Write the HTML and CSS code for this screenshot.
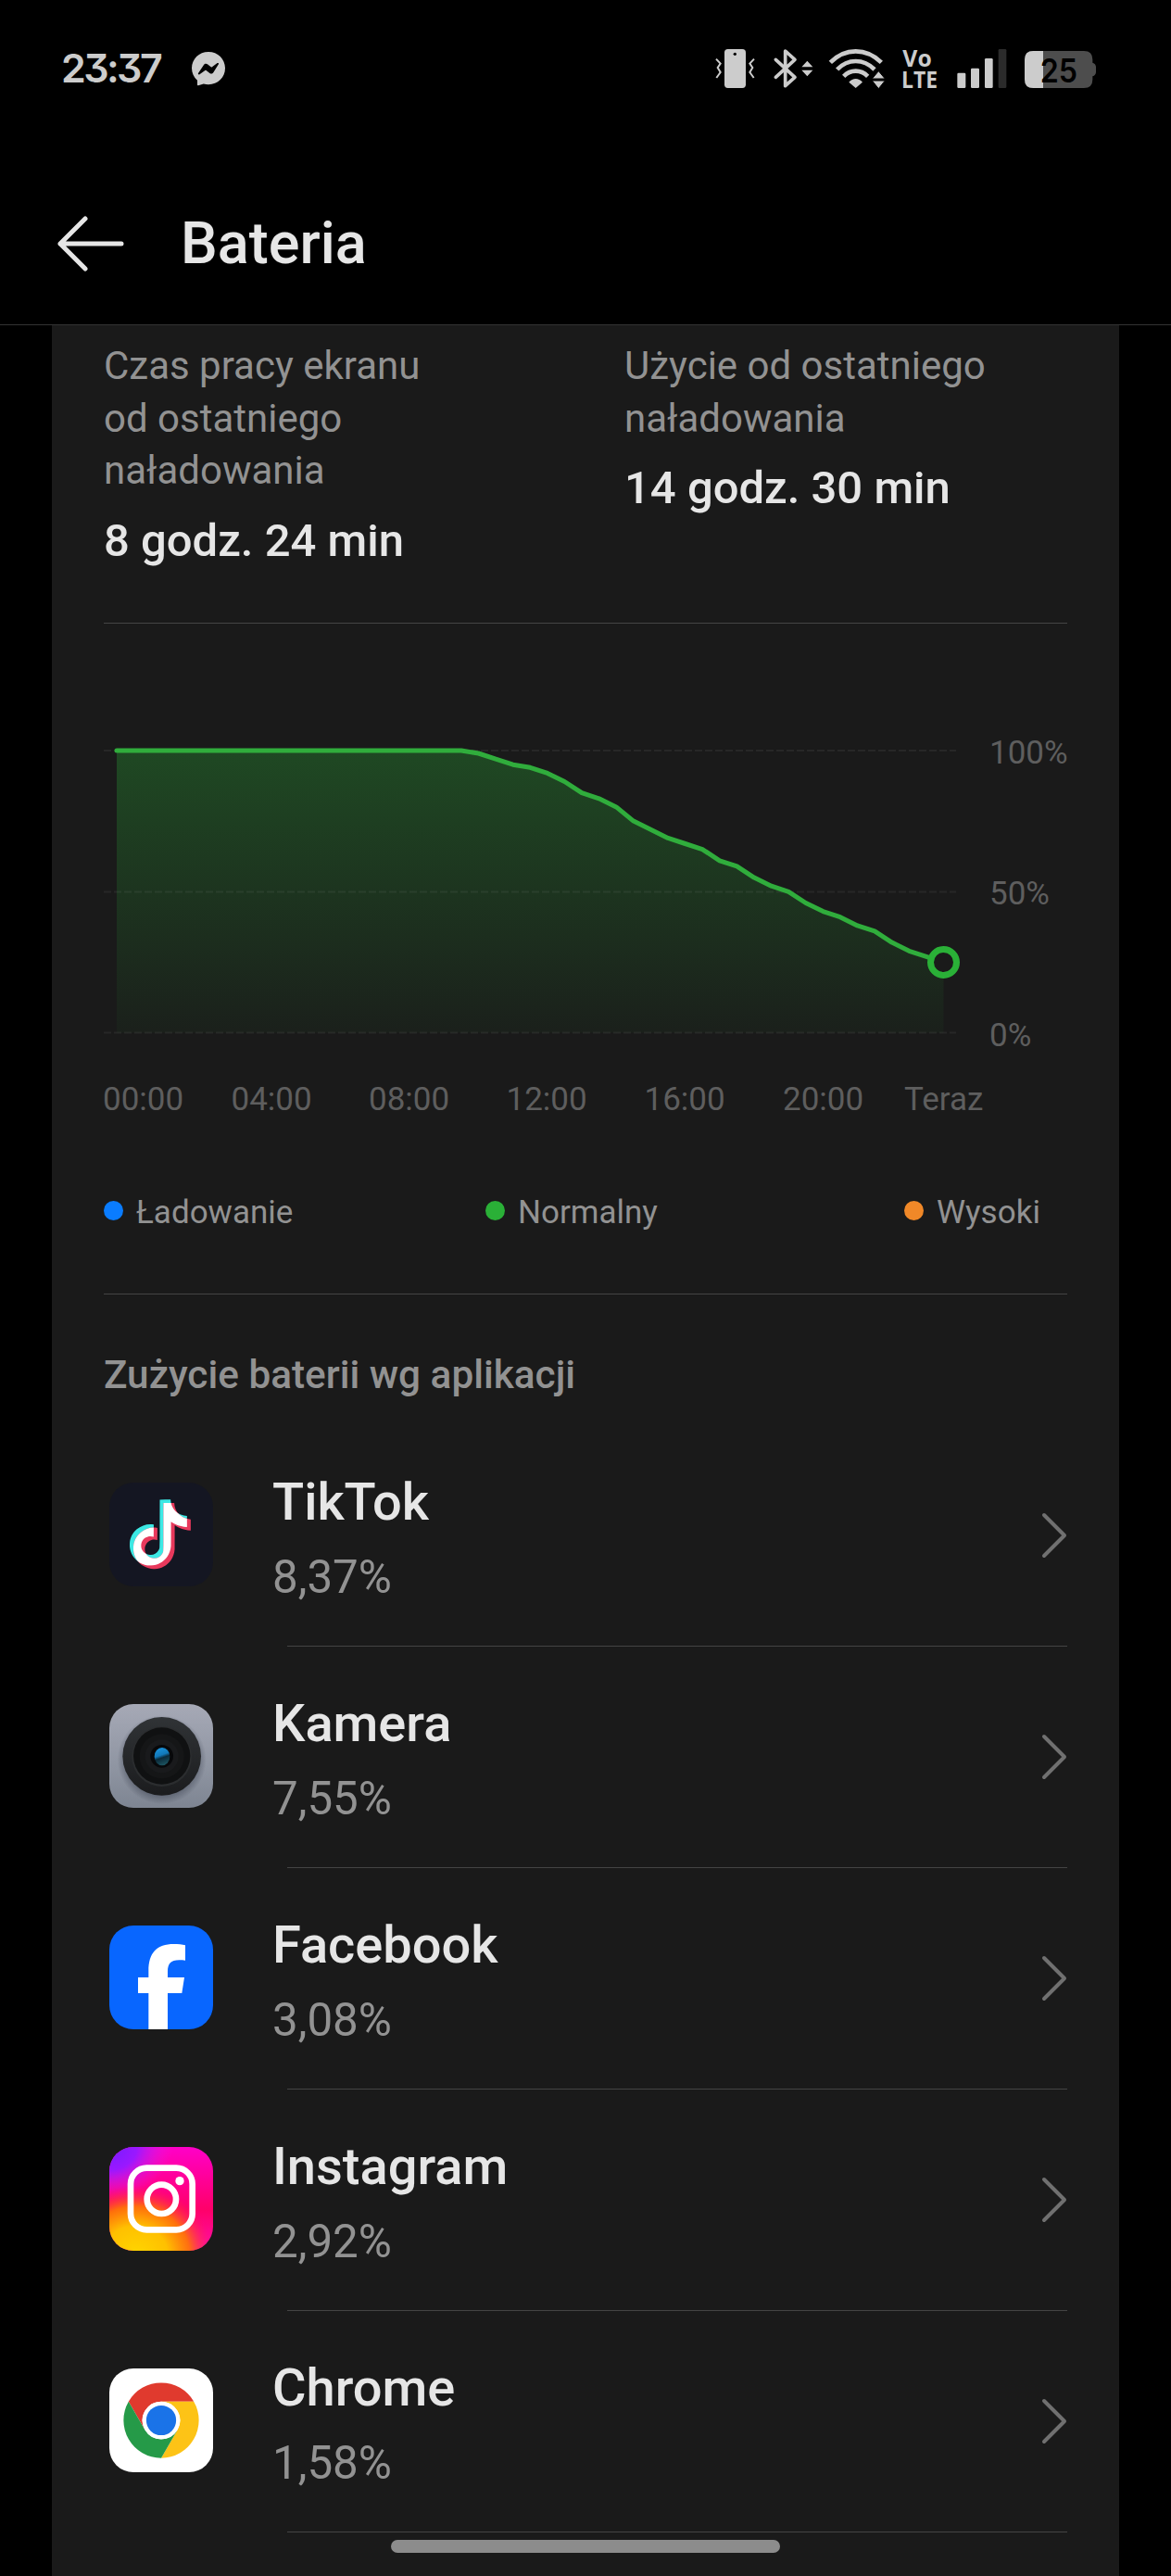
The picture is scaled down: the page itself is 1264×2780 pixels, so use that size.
FILE: index.html
```html
<!DOCTYPE html>
<html lang="pl">
<head>
  <meta charset="UTF-8">
  <title>Bateria</title>
  <link rel="stylesheet" href="styles.css">
</head>
<body>
  <div class="statusbar">
    <span class="clock">23:37</span>
    <svg class="messenger" viewBox="0 0 36 36" width="36" height="36">
      <path fill="#ccc" d="M18 0C28.200 0 36 7.600 36 17.600S28.200 35.200 18 35.200c-1.900 0-3.600-.2-5.200-.7L7 36.200c-.6.200-1-.1-1-.7v-4.700C2.200 27.500 0 22.900 0 17.600 0 7.600 7.800 0 18 0z"/>
      <path fill="#000" d="M7 23l6-9c.9-1.400 2.600-1.700 3.900-.7l3.800 2.900c.4.300.8.300 1.200 0l5.700-4.100c.9-.6 1.900.3 1.300 1.200l-5.600 8.900c-.9 1.400-2.600 1.700-3.900.7l-3.800-2.900c-.4-.3-.8-.3-1.200 0l-6 4.200c-.9.600-2-.3-1.400-1.200z"/>
    </svg>
    <div class="status-icons">
      <!-- wibracje -->
      <svg viewBox="66 69 137 126" width="45.670" height="42">
        <rect x="96" y="69" width="69" height="126" rx="11" fill="#ccc"/>
        <circle cx="130" cy="85" r="5" fill="#000"/>
        <path d="M69 101l14 15-9 13 9 15-13 18M192 101l-14 15 9 13-9 15 13 18" fill="none" stroke="#ccc" stroke-width="6"/>
      </svg>
      <!-- bluetooth -->
      <svg viewBox="257 69 123 126" width="41" height="42">
        <path d="M261 103l62 57-31 28V75l31 28-62 57" fill="none" stroke="#ccc" stroke-width="11" stroke-linejoin="round" stroke-linecap="round"/>
        <path d="M345 127l18-20 18 20zM345 137l18 20 18-20z" fill="#ccc"/>
      </svg>
      <!-- wifi -->
      <svg viewBox="434 69 183 126" width="61" height="42">
        <g fill="none" stroke="#ccc" stroke-width="14">
          <path d="M438 112Q474 76 520 76T603 112"/>
          <path d="M460 135Q486 108 520 108T581 135"/>
          <path d="M481 157Q498 140 520 140T559 157"/>
        </g>
        <path d="M498 176Q508 165 520 165T542 176L520 195z" fill="#ccc"/>
        <path d="M573 165l21-25 21 25zM573 171l21 26 21-26z" fill="#ccc" stroke="#000" stroke-width="3"/>
      </svg>
      <svg class="volte" viewBox="671 69 123 126" width="41" height="42">
        <text x="672" y="125" font-size="74" textLength="94" lengthAdjust="spacingAndGlyphs">Vo</text>
        <text x="668" y="194" font-size="74" textLength="117" lengthAdjust="spacingAndGlyphs">LTE</text>
      </svg>
      <!-- zasięg -->
      <svg viewBox="848 69 166 126" width="55.330" height="42">
        <rect x="849" y="146" width="27" height="49" rx="4" fill="#ccc"/>
        <rect x="893" y="131" width="27" height="64" rx="4" fill="#ccc"/>
        <rect x="938" y="99" width="26" height="96" rx="4" fill="#ccc"/>
        <rect x="982" y="69" width="26" height="126" rx="4" fill="#2b2b2b"/>
      </svg>
      <svg class="battery" viewBox="1068 69 234 126" width="78" height="42">
        <path d="M1096 75h164q28 0 28 28v10q11 4 11 14v16q0 10-11 14v10q0 28-28 28h-164q-28 0-28-28v-64q0-28 28-28z" fill="#4d4d4d"/>
        <path d="M1128 75h-32q-28 0-28 28v64q0 28 28 28h32z" fill="#ccc"/>
        <text x="1118" y="177" font-size="107" textLength="121" lengthAdjust="spacingAndGlyphs">25</text>
      </svg>
    </div>
  </div>

  <header class="header">
    <svg class="back" viewBox="0 0 72 60" width="72" height="60">
      <path d="M30 3L3 30l27 27M3 30h66" fill="none" stroke="#e6e6e6" stroke-width="5" stroke-linecap="round" stroke-linejoin="round"/>
    </svg>
    <h1>Bateria</h1>
  </header>

  <main class="card">
    <section class="stats">
      <div class="stat">
        <p class="label">Czas pracy ekranu<br>od ostatniego<br>naładowania</p>
        <p class="value">8 godz. 24 min</p>
      </div>
      <div class="stat">
        <p class="label">Użycie od ostatniego<br>naładowania</p>
        <p class="value">14 godz. 30 min</p>
      </div>
    </section>

    <svg class="chart" viewBox="112 673 1048 567" width="1048" height="567">
      <defs>
        <linearGradient id="fill" gradientUnits="userSpaceOnUse" x1="0" y1="810" x2="0" y2="1115">
          <stop offset="0" stop-color="#2ab037" stop-opacity=".31"/>
          <stop offset="1" stop-color="#2ab037" stop-opacity=".04"/>
        </linearGradient>
      </defs>
      <path id="area" fill="url(#fill)"/>
      <g class="grid">
        <path d="M112 810H1032"/>
        <path d="M112 962.500H1032"/>
        <path d="M112 1114.500H1032"/>
      </g>
      <path id="line" class="line"/>
      <circle cx="1018.500" cy="1038.500" r="14" class="now"/>
      <g class="axis">
        <text x="1068" y="824">100%</text>
        <text x="1068" y="976">50%</text>
        <text x="1068" y="1129">0%</text>
        <text x="111" y="1197.500">00:00</text>
        <text x="249.500" y="1197.500">04:00</text>
        <text x="398" y="1197.500">08:00</text>
        <text x="546.500" y="1197.500">12:00</text>
        <text x="695.500" y="1197.500">16:00</text>
        <text x="845" y="1197.500">20:00</text>
        <text x="976" y="1197.500">Teraz</text>
      </g>
    </svg>

    <div class="legend">
      <span class="blue">Ładowanie</span>
      <span class="green">Normalny</span>
      <span class="orange">Wysoki</span>
    </div>

    <h2>Zużycie baterii wg aplikacji</h2>

    <ul class="apps">
      <li>
        <svg class="icon" viewBox="0 0 336 336">
          <defs>
            <path id="note" d="M12.525.02c1.310-.02 2.610-.01 3.910-.02.08 1.530.63 3.090 1.750 4.170 1.120 1.110 2.700 1.620 4.240 1.790v4.030c-1.440-.05-2.890-.35-4.200-.97-.57-.26-1.100-.59-1.620-.93-.01 2.920.01 5.840-.02 8.750-.08 1.400-.54 2.790-1.350 3.940-1.310 1.920-3.580 3.170-5.910 3.210-1.430.08-2.860-.31-4.080-1.030-2.020-1.190-3.440-3.370-3.650-5.710-.02-.5-.03-1-.01-1.490.18-1.900 1.120-3.720 2.580-4.960 1.660-1.440 3.980-2.130 6.150-1.720.02 1.480-.04 2.960-.04 4.440-.99-.32-2.150-.23-3.020.37-.63.41-1.110 1.040-1.360 1.750-.21.51-.15 1.070-.14 1.610.24 1.640 1.820 3.020 3.500 2.870 1.120-.01 2.190-.66 2.770-1.610.19-.33.4-.67.41-1.060.1-1.790.06-3.570.07-5.360.01-4.030-.01-8.050.02-12.070z"/>
            <clipPath id="noteClip"><use href="#note" transform="translate(52 55) scale(8.900)"/></clipPath>
          </defs>
          <rect width="336" height="336" rx="78" fill="#141622"/>
          <use href="#note" transform="translate(52 55) scale(8.900)" fill="#3ce8e4"/>
          <use href="#note" transform="translate(64 66) scale(8.900)" fill="#e8395c"/>
          <g clip-path="url(#noteClip)"><use href="#note" transform="translate(64 66) scale(8.900)" fill="#fff"/></g>
        </svg>
        <div class="info"><p class="name">TikTok</p><p class="percent">8,37%</p></div>
        <svg class="chevron" viewBox="0 0 28 50"><path d="M3 3l22 22L3 47"/></svg>
      </li>
      <li>
        <svg class="icon" viewBox="0 0 336 336">
          <defs>
            <linearGradient id="metal" x1="0" y1="0" x2="0" y2="1">
              <stop offset="0" stop-color="#a6a9b6"/><stop offset=".6" stop-color="#8f95a2"/><stop offset="1" stop-color="#7e8592"/>
            </linearGradient>
            <linearGradient id="ring" x1="0" y1="0" x2="0" y2="1">
              <stop offset="0" stop-color="#303336"/><stop offset="1" stop-color="#1b1c1e"/>
            </linearGradient>
            <linearGradient id="glass" x1=".3" y1="0" x2=".6" y2="1">
              <stop offset="0" stop-color="#1a93dc"/><stop offset=".42" stop-color="#1278b8"/><stop offset=".58" stop-color="#0a2a3a"/><stop offset="1" stop-color="#1d5662"/>
            </linearGradient>
            <radialGradient id="shade"><stop offset=".8" stop-color="#3c4250" stop-opacity=".5"/><stop offset="1" stop-color="#3c4250" stop-opacity="0"/></radialGradient>
          </defs>
          <rect width="336" height="336" rx="78" fill="url(#metal)"/>
          <circle cx="170" cy="180" r="144" fill="url(#shade)"/>
          <circle cx="170" cy="169" r="127" fill="url(#ring)"/>
          <circle cx="170" cy="170" r="97" fill="#2b2d2f"/>
          <circle cx="170" cy="168" r="92" fill="#101112"/>
          <circle cx="170" cy="169" r="72" fill="#151617"/>
          <circle cx="170" cy="169" r="54" fill="#191a1c"/>
          <circle cx="170" cy="169" r="37" fill="#07080a"/>
          <ellipse cx="171" cy="170" rx="25" ry="29" fill="url(#glass)"/>
        </svg>
        <div class="info"><p class="name">Kamera</p><p class="percent">7,55%</p></div>
        <svg class="chevron" viewBox="0 0 28 50"><path d="M3 3l22 22L3 47"/></svg>
      </li>
      <li>
        <svg class="icon" viewBox="0 0 336 336">
          <rect width="336" height="336" rx="78" fill="#0866ff"/>
          <path d="M127 336V219H93v-51h34v-21c0-58 26-87 82-87 13 0 28 1 37 4v49c-6-1-12-1-20-1-27 0-37 11-37 38v18h54l-8 51h-46v117z" fill="#fff"/>
        </svg>
        <div class="info"><p class="name">Facebook</p><p class="percent">3,08%</p></div>
        <svg class="chevron" viewBox="0 0 28 50"><path d="M3 3l22 22L3 47"/></svg>
      </li>
      <li>
        <svg class="icon" viewBox="0 0 336 336">
          <defs>
            <linearGradient id="pink" x1=".5" y1="0" x2=".5" y2="1">
              <stop offset="0" stop-color="#ff00c8"/><stop offset=".6" stop-color="#ff0069"/><stop offset="1" stop-color="#ff10a8"/>
            </linearGradient>
            <radialGradient id="purple" gradientUnits="userSpaceOnUse" cx="0" cy="0" r="200" gradientTransform="translate(10 10) rotate(-15) scale(1 .8)">
              <stop offset="0" stop-color="#7a1cff"/><stop offset=".4" stop-color="#9a18ff"/><stop offset="1" stop-color="#f01ce0" stop-opacity="0"/>
            </radialGradient>
            <radialGradient id="yellow" gradientUnits="userSpaceOnUse" cx="0" cy="0" r="250" gradientTransform="translate(85 350) scale(1 .9)">
              <stop offset="0" stop-color="#ffd600"/><stop offset=".42" stop-color="#ffc000"/><stop offset=".7" stop-color="#ff7a00" stop-opacity=".9"/><stop offset="1" stop-color="#ff1a50" stop-opacity="0"/>
            </radialGradient>
          </defs>
          <rect width="336" height="336" rx="78" fill="url(#pink)"/>
          <rect width="336" height="336" rx="78" fill="url(#purple)"/>
          <rect width="336" height="336" rx="78" fill="url(#yellow)"/>
          <g fill="none" stroke="#fff" stroke-width="20">
            <rect x="69" y="68" width="200" height="200" rx="52"/>
            <circle cx="169" cy="169" r="47"/>
          </g>
          <circle cx="228" cy="110" r="14" fill="#fff"/>
        </svg>
        <div class="info"><p class="name">Instagram</p><p class="percent">2,92%</p></div>
        <svg class="chevron" viewBox="0 0 28 50"><path d="M3 3l22 22L3 47"/></svg>
      </li>
      <li>
        <svg class="icon" viewBox="-56 -56 112 112">
          <rect x="-56" y="-56" width="112" height="112" rx="26" fill="#fff"/>
          <path fill="#e03a2e" d="M-35.200-20.300A40.700 40.700 0 0 1 35.200-20.300H0A20.300 20.300 0 0 0-17.600 10.200z"/>
          <path fill="#fdc316" d="M35.200-20.300A40.700 40.700 0 0 1 0 40.700L17.600 10.200A20.300 20.300 0 0 0 0-20.300z"/>
          <path fill="#259a48" d="M0 40.700A40.700 40.700 0 0 1-35.200-20.300L-17.600 10.200A20.300 20.300 0 0 0 17.600 10.200z"/>
          <circle r="20.300" fill="#fff"/>
          <circle r="16.100" fill="#1a73e8"/>
        </svg>
        <div class="info"><p class="name">Chrome</p><p class="percent">1,58%</p></div>
        <svg class="chevron" viewBox="0 0 28 50"><path d="M3 3l22 22L3 47"/></svg>
      </li>
    </ul>
  </main>
  <div class="home-bar"></div>

  <script>
    // poziom baterii co pół godziny, po 10:00 zaczyna spadać
    const levels = Array(21).fill(100).concat([
      99, 97, 95, 94, 92, 89, 85, 83, 80, 75, 72, 69, 67, 65,
      61, 59, 55, 52, 50, 46, 43, 41, 38, 36, 32, 29, 27, 25
    ]);
    const points = levels.map((level, i) =>
      (126 + i * 18.594).toFixed(1) + " " + (810 + (100 - level) * 3.046).toFixed(1));
    const line = "M" + points.join("L");
    document.getElementById("line").setAttribute("d", line);
    document.getElementById("area").setAttribute("d", line + "V1114.500H126Z");
  </script>
</body>
</html>
```
FILE: styles.css
```css
* {
  box-sizing: border-box;
}
body {
  margin: 0;
  height: 2780px;
  overflow: hidden;
  background: #000;
  color: #e6e6e6;
  font-family: Roboto, sans-serif;
}
svg {
  display: block;
  flex: none;
  overflow: visible;
}
p, h1, h2, ul {
  margin: 0;
  padding: 0;
}
.statusbar {
  display: flex;
  align-items: center;
  height: 148px;
  padding: 0 80px 0 66px;
}
.clock {
  width: 141px;
  padding-bottom: 3px;
  font: 600 43px/50px Inter, sans-serif;
  font-feature-settings: "cv09";
  letter-spacing: -2.6px;
  color: #ccc;
}
.status-icons {
  display: flex;
  gap: 18px;
  margin-left: auto;
}
.volte text, .battery text {
  font-family: "Open Sans", sans-serif;
  font-weight: 700;
  fill: #ccc;
}
.battery text {
  font-family: Inter, sans-serif;
  font-weight: 600;
  fill: #000;
}
.header {
  display: flex;
  align-items: center;
  height: 203px;
  padding: 28px 62px 0;
  border-bottom: 1px solid #333;
}
.header h1 {
  margin-left: 61px;
  font-size: 63px;
  font-weight: 500;
  line-height: 74px;
}
.card {
  height: 2429px;
  margin: 0 56px;
  padding: 0 56px;
  background: #1a1a1a;
}
.stats {
  display: grid;
  grid-template-columns: 562px 1fr;
  height: 322px;
  padding-top: 16px;
  border-bottom: 1px solid #444;
}
.label {
  font-size: 42px;
  line-height: 56.5px;
  color: #929292;
}
.value {
  margin-top: 18px;
  font-size: 49px;
  font-weight: 500;
  line-height: 58px;
}
.grid path {
  stroke: #fff;
  stroke-opacity: .06;
  stroke-width: 2;
  stroke-dasharray: 8 3;
}
.line {
  fill: none;
  stroke: #30ad3c;
  stroke-width: 5;
  stroke-linejoin: round;
  stroke-linecap: round;
}
.now {
  fill: #1a1a1a;
  stroke: #2ab037;
  stroke-width: 7;
}
.axis text {
  font-size: 35px;
  fill: #5e5e5e;
}
.legend {
  display: grid;
  grid-template-columns: 412px 452px 1fr;
  height: 157px;
  padding-top: 48px;
  border-bottom: 1px solid #444;
  font-size: 35px;
  line-height: 42px;
  color: #929292;
}
.legend span::before {
  content: "";
  display: inline-block;
  width: 21px;
  height: 21px;
  margin-right: 14px;
  border-radius: 50%;
  vertical-align: 3px;
}
.legend .blue::before {
  background: #0a7cff;
}
.legend .green::before {
  background: #2ab037;
}
.legend .orange::before {
  background: #f08828;
}
h2 {
  height: 141px;
  padding-top: 62px;
  font-size: 42.3px;
  font-weight: 500;
  line-height: 50px;
  color: #929292;
}
.apps {
  list-style: none;
}
.apps li {
  display: flex;
  flex-wrap: wrap;
  height: 239px;
}
.apps li::after {
  content: "";
  width: 100%;
  height: 1px;
  margin-left: 198px;
  background: #444;
}
.icon {
  width: 112px;
  height: 112px;
  margin: 62px 64px 64px 6px;
}
.info {
  padding-top: 50px;
}
.name {
  font-size: 56px;
  font-weight: 500;
  line-height: 66px;
}
.percent {
  margin-top: 19px;
  font-size: 49.3px;
  line-height: 58px;
  color: #929292;
}
.chevron {
  width: 28px;
  height: 50px;
  margin: 94px 0 0 auto;
  fill: none;
  stroke: #707070;
  stroke-width: 4;
  stroke-linecap: round;
  stroke-linejoin: round;
}
.home-bar {
  position: fixed;
  left: 422px;
  bottom: 25px;
  width: 420px;
  height: 14px;
  border-radius: 7px;
  background: #8c8c8c;
}
```
